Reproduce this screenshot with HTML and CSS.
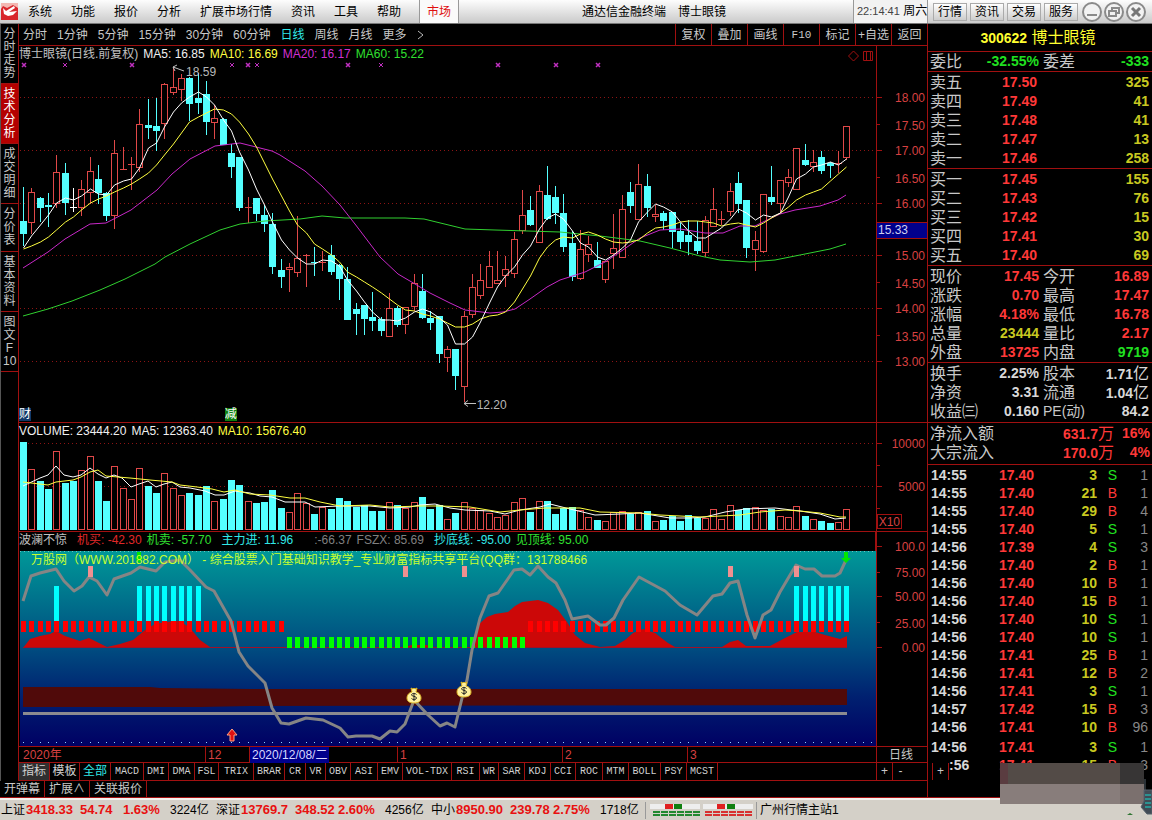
FILE: index.html
```html
<!DOCTYPE html>
<html lang="zh-CN">
<head>
<meta charset="utf-8">
<title>通达信金融终端 博士眼镜</title>
<link rel="stylesheet" href="styles.css">
</head>
<body>
<header class="menubar">
  <svg class="logo" width="17" height="17" viewBox="0 0 17 17" aria-hidden="true"><rect width="17" height="17" fill="#d8262c"/><path d="M0 0h17v5L12 2 6 5 2 3 0 6z" fill="#f3b7b2"/><path d="M2 5l3 3 8-5 1 2-6 4 8-1-4 4-5 1-4-2z" fill="#fff"/></svg>
  <nav class="menus">
    <button>系统</button><button>功能</button><button>报价</button><button>分析</button><button>扩展市场行情</button><button>资讯</button><button>工具</button><button>帮助</button>
  </nav>
  <button class="market">市场</button>
  <h1 class="apptitle"><span>通达信金融终端</span><span>博士眼镜</span></h1>
  <div class="clock"><time>22:14:41</time> 周六</div>
  <div class="quick"><button>行情</button><button>资讯</button><button>交易</button><button>服务</button></div>
  <div class="winbtns">
    <button aria-label="最小化"><svg width="20" height="20" viewBox="0 0 20 20"><circle cx="10" cy="10" r="9" /><path d="M5 13h10"/></svg></button>
    <button aria-label="还原"><svg width="20" height="20" viewBox="0 0 20 20"><circle cx="10" cy="10" r="9" /><path d="M8 9V6h7v5h-3M5 9h7v5H5z"/></svg></button>
    <button aria-label="关闭"><svg width="20" height="20" viewBox="0 0 20 20"><circle cx="10" cy="10" r="9" /><path class="cross" d="M6 6l8 8M14 6l-8 8"/></svg></button>
  </div>
</header>

<main class="work">
  <section class="left">
    <div class="upper">
      <nav class="side">
        <button class="s4">分时走势</button><button class="s4 on">技术分析</button><button class="s4">成交明细</button><button class="s3">分价表</button><button class="s4">基本资料</button><button class="s4">图文<br>F<br><span class="ten">10</span></button>
      </nav>
      <div class="charts">
        <div class="toolbar">
          <div class="periods"><button>分时</button><button>1分钟</button><button>5分钟</button><button>15分钟</button><button>30分钟</button><button>60分钟</button><button class="on">日线</button><button>周线</button><button>月线</button><button>更多</button><svg width="8" height="12" viewBox="0 0 8 12"><path d="M1 2l5 4-5 4" fill="none" stroke="#b8b8b8"/></svg></div>
          <div class="tools"><button>复权</button><button>叠加</button><button>画线</button><button class="mono">F10</button><button>标记</button><button>+自选</button><button>返回</button></div>
        </div>

        <div class="panel">
          <div class="plot">
            <div class="legend"><span class="g">博士眼镜(日线.前复权)</span><span class="w">MA5: 16.85</span><span class="y">MA10: 16.69</span><span class="m">MA20: 16.17</span><span class="gr">MA60: 15.22</span>
              <svg class="corner" width="26" height="12" viewBox="0 0 26 12"><path d="M5.500 1l5 5-5 5-5-5zM15.500 1.500h9v9h-9zM18.500 1.500v9M22.500 1.500v9" fill="none" stroke="#a01010"/></svg></div>
            <svg class="price" id="price" viewBox="19 62 857 360" preserveAspectRatio="none"></svg>
            <span class="note high">18.59</span><span class="note low">12.20</span>
            <span class="badge fin">财</span><span class="badge cut">减</span>
          </div>
          <svg class="axis" width="50" height="376" viewBox="877 46 50 376">
            <path class="tk" d="M877 97.500h5M877 124.500h3M877 150.500h5M877 177.500h3M877 203.500h5M877 255.500h5M877 282.500h3M877 308.500h5M877 335.500h3M877 361.500h5"/>
            <rect x="877" y="222" width="50" height="16" fill="#00008c"/><path class="tk" d="M877 222.500h50M877 238.500h50"/>
            <text x="925" y="102">18.00</text><text x="925" y="130">17.50</text><text x="925" y="155">17.00</text><text x="925" y="183">16.50</text><text x="925" y="208">16.00</text><text x="908" y="234" class="cur">15.33</text><text x="925" y="260">15.00</text><text x="925" y="288">14.50</text><text x="925" y="313">14.00</text><text x="925" y="341">13.50</text><text x="925" y="366">13.00</text>
          </svg>
        </div>

        <div class="panel">
          <div class="plot">
            <div class="legend"><span class="w">VOLUME: 23444.20</span><span class="w">MA5: 12363.40</span><span class="y">MA10: 15676.40</span></div>
            <svg class="vol" id="vol" viewBox="19 439 857 92" preserveAspectRatio="none"></svg>
          </div>
          <svg class="axis" width="50" height="108" viewBox="877 423 50 108">
            <path class="tk" d="M877 443.500h5M877 465.500h3M877 486.500h5M877 508.500h3"/>
            <text x="925" y="448">10000</text><text x="925" y="491">5000</text>
            <rect x="877.500" y="514.500" width="24" height="14" fill="none" stroke="#a01010"/><text x="900" y="526">X10</text>
          </svg>
        </div>

        <div class="panel">
          <div class="plot">
            <div class="legend tall"><span class="g">波澜不惊</span><span class="r first">机买: -42.30</span><span class="gr">机卖: -57.70</span><span class="c first">主力进: 11.96</span><span class="d far">:-66.37</span><span class="d">FSZX: 85.69</span><span class="c first">抄底线: -95.00</span><span class="gr">见顶线: 95.00</span></div>
            <svg class="ind" id="ind" viewBox="19 550 857 196" preserveAspectRatio="none"></svg>
            <span class="banner">万股网（WWW.201882.COM） - 综合股票入门基础知识教学_专业财富指标共享平台(QQ群：131788466</span>
          </div>
          <svg class="axis thick" width="50" height="214" viewBox="877 532 50 214">
            <path class="tk" d="M877 546.500h5M877 572.500h3M877 596.500h5M877 622.500h3M877 647.500h5"/>
            <text x="925" y="551">100.0</text><text x="925" y="577">75.00</text><text x="925" y="601">50.00</text><text x="925" y="628">25.00</text><text x="925" y="652">0.00</text>
          </svg>
        </div>

        <div class="timeaxis">
          <div class="months"><span>2020年</span><span>12</span><span class="day">2020/12/08/二</span><span>1</span><span>2</span><span>3</span></div>
          <button class="unit">日线</button>
        </div>
        <div class="indrow">
          <div class="inds"><button class="act">指标</button><button>模板</button><button class="on">全部</button><button>MACD</button><button>DMI</button><button>DMA</button><button>FSL</button><button>TRIX</button><button>BRAR</button><button>CR</button><button>VR</button><button>OBV</button><button>ASI</button><button>EMV</button><button>VOL-TDX</button><button>RSI</button><button>WR</button><button>SAR</button><button>KDJ</button><button>CCI</button><button>ROC</button><button>MTM</button><button>BOLL</button><button>PSY</button><button>MCST</button></div>
          <div class="zooms"><button>+</button><button>-</button><button class="plus">+</button></div>
        </div>
      </div>
    </div>
    <div class="foot"><button>开弹幕</button><button>扩展∧</button><button>关联报价</button></div>
  </section>

  <aside class="quote">
    <h2><b>300622</b> 博士眼镜</h2>
    <dl class="q4"><dt>委比</dt><dd class="gr">-32.55%</dd><dt>委差</dt><dd class="gr">-333</dd></dl>
    <table class="book">
      <tr><th>卖五</th><td>17.50</td><td>325</td></tr><tr><th>卖四</th><td>17.49</td><td>41</td></tr><tr><th>卖三</th><td>17.48</td><td>41</td></tr><tr><th>卖二</th><td>17.47</td><td>13</td></tr><tr><th>卖一</th><td>17.46</td><td>258</td></tr>
    </table>
    <table class="book">
      <tr><th>买一</th><td>17.45</td><td>155</td></tr><tr><th>买二</th><td>17.43</td><td>76</td></tr><tr><th>买三</th><td>17.42</td><td>15</td></tr><tr><th>买四</th><td>17.41</td><td>30</td></tr><tr><th>买五</th><td>17.40</td><td>69</td></tr>
    </table>
    <dl class="q4 pad">
      <dt>现价</dt><dd>17.45</dd><dt>今开</dt><dd>16.89</dd>
      <dt>涨跌</dt><dd>0.70</dd><dt>最高</dt><dd>17.47</dd>
      <dt>涨幅</dt><dd>4.18%</dd><dt>最低</dt><dd>16.78</dd>
      <dt>总量</dt><dd class="y">23444</dd><dt>量比</dt><dd>2.17</dd>
      <dt>外盘</dt><dd>13725</dd><dt>内盘</dt><dd class="gr">9719</dd>
    </dl>
    <dl class="q4 pad3">
      <dt>换手</dt><dd class="w">2.25%</dd><dt>股本</dt><dd class="w">1.71<i>亿</i></dd>
      <dt>净资</dt><dd class="w">3.31</dd><dt>流通</dt><dd class="w">1.04<i>亿</i></dd>
      <dt>收益㈢</dt><dd class="w">0.160</dd><dt class="pe">PE(动)</dt><dd class="w">84.2</dd>
    </dl>
    <dl class="flow">
      <dt>净流入额</dt><dd>631.7<i>万</i></dd><dd>16%</dd>
      <dt>大宗流入</dt><dd>170.0<i>万</i></dd><dd>4%</dd>
    </dl>
    <table class="ticks">
      <tr><td>14:55</td><td>17.40</td><td>3</td><td class="s">S</td><td>1</td></tr>
      <tr><td>14:55</td><td>17.40</td><td>21</td><td>B</td><td>1</td></tr>
      <tr><td>14:55</td><td>17.40</td><td>29</td><td>B</td><td>4</td></tr>
      <tr><td>14:55</td><td>17.40</td><td>5</td><td class="s">S</td><td>1</td></tr>
      <tr><td>14:56</td><td>17.39</td><td>4</td><td class="s">S</td><td>3</td></tr>
      <tr><td>14:56</td><td>17.40</td><td>2</td><td>B</td><td>1</td></tr>
      <tr><td>14:56</td><td>17.40</td><td>10</td><td>B</td><td>1</td></tr>
      <tr><td>14:56</td><td>17.40</td><td>15</td><td>B</td><td>1</td></tr>
      <tr><td>14:56</td><td>17.40</td><td>10</td><td class="s">S</td><td>1</td></tr>
      <tr><td>14:56</td><td>17.40</td><td>10</td><td class="s">S</td><td>1</td></tr>
      <tr><td>14:56</td><td>17.41</td><td>25</td><td>B</td><td>1</td></tr>
      <tr><td>14:56</td><td>17.41</td><td>12</td><td>B</td><td>2</td></tr>
      <tr><td>14:56</td><td>17.41</td><td>3</td><td class="s">S</td><td>1</td></tr>
      <tr><td>14:57</td><td>17.42</td><td>15</td><td>B</td><td>3</td></tr>
      <tr><td>14:56</td><td>17.41</td><td>10</td><td>B</td><td>96</td></tr>
      <tr class="late"><td>14:56</td><td>17.41</td><td>3</td><td class="s">S</td><td>1</td></tr>
      <tr class="part"><td>:56</td><td>17.41</td><td>15</td><td>B</td><td>3</td></tr>
    </table>
    <svg class="cover" width="152" height="57" viewBox="1000 763 152 57" aria-hidden="true">
      <rect x="1000" y="763" width="144" height="21" fill="#534b47"/><rect x="1000" y="784" width="144" height="20" fill="#887d7b"/>
      <rect x="1000" y="763" width="8" height="21" fill="#5a3c40"/><rect x="1120" y="763" width="24" height="21" fill="#373535"/><rect x="1120" y="784" width="24" height="20" fill="#7b706e"/>
      <path d="M1145 779v11M1144 790h8v24h-5l-6-7 3-6z" fill="#414b55" stroke="#56636c"/><path d="M1145 795h6M1145 799h6M1145 803h6M1145 807h6" stroke="#25aaa5" stroke-width="1.500"/>
      <path d="M1127 815l3-2 3 2z" fill="#2d7530"/>
    </svg>
  </aside>
</main>

<footer class="status">
  <div class="idx"><span>上证</span><b>3418.33</b><b>54.74</b><b>1.63%</b><span>3224亿</span></div>
  <div class="idx"><span>深证</span><b>13769.7</b><b>348.52</b><b>2.60%</b><span>4256亿</span></div>
  <div class="idx"><span>中小</span><b>8950.90</b><b>239.78</b><b>2.75%</b><span>1718亿</span></div>
  <div class="lamps"><svg width="104" height="17" viewBox="648 801 104 17"><path d="M649 803h50v5h-50zM702 803h50v5h-50z" fill="#eee"/><path d="M664 803h8v5h-8zM716 803h8v5h-8z" fill="#e02020"/><path d="M673 803h8v5h-8zM726 803h8v5h-8z" fill="#108010"/><g fill="none" stroke-width="2" stroke-dasharray="7 1"><path d="M652 811h47M652 814h47" stroke="#208830"/><path d="M704 811h47M704 814h47" stroke="#d83030"/></g></svg></div>
  <span class="host">广州行情主站1</span>
</footer>
<script src="charts.js"></script>
</body>
</html>
```

FILE: styles.css
```css
* { box-sizing: border-box; }
body { margin: 0; min-height: 100vh; display: flex; flex-direction: column; background: #000; color: #c8c8c8; font: 12px/16px "Liberation Sans", "Noto Sans CJK SC", sans-serif; overflow-x: hidden; }
button { font: inherit; color: inherit; background: none; border: 0; padding: 0; margin: 0; white-space: nowrap; }
h1, h2, dl, dd { margin: 0; }
.g { color: #c0c0c0; } .w { color: #f0f0f0; } .y { color: #ffff40; } .m { color: #d030d0; } .gr { color: #30e030; } .r { color: #e02828; } .c { color: #30e8e8; } .d { color: #808080; }

.menubar { height: 24px; display: flex; align-items: center; color: #000; background: linear-gradient(#fdfdfd, #cacaca); border-bottom: 1px solid #777; }
.logo { margin: 0 0 0 1px; }
.menus { display: flex; gap: 19px; padding-left: 10px; }
.market { align-self: stretch; width: 40px; margin-left: 18px; color: #e01010; background: #fafafa; border-left: 1px solid #999; border-right: 1px solid #999; }
.apptitle { flex: 1; display: flex; gap: 12px; justify-content: center; padding-right: 4px; font: inherit; }
.clock { align-self: stretch; width: 75px; padding: 3px 0 0 3px; background: #f2f2f2; border-left: 1px solid #999; border-right: 1px solid #999; white-space: nowrap; }
.clock time { font-size: 11px; color: #444; }
.quick { display: flex; gap: 3px; padding-left: 5px; }
.quick button { width: 34px; height: 18px; line-height: 16px; border: 1px solid #aaa; background: linear-gradient(#fff, #ccc); }
.winbtns { display: flex; gap: 2px; padding: 0 6px 0 4px; }
.winbtns button { height: 20px; }
.winbtns svg { display: block; fill: none; stroke: #8a8a8a; stroke-width: 2; }
.winbtns circle { fill: #f2f2f2; }
.winbtns .cross { stroke-width: 3; stroke: #777; }

.work { flex: 1; display: flex; }
.left { flex: 1; min-width: 0; display: flex; flex-direction: column; }
.upper { display: flex; flex: 1; }
.side { width: 19px; display: flex; flex-direction: column; border-left: 1px solid #555; border-right: 1px solid #a01010; }
.side button { width: 17px; padding: 0 2px; line-height: 13px; white-space: normal; word-break: break-all; border-bottom: 1px solid #a01010; }
.side .ten { white-space: nowrap; }
.side .s4 { height: 60px; } .side .s3 { height: 48px; }
.side .on { background: #b40000; color: #fff; }
.charts { flex: 1; min-width: 0; }

.toolbar { height: 22px; display: flex; justify-content: space-between; border-bottom: 1px solid #a01010; }
.periods { display: flex; align-items: center; gap: 10px; padding-left: 4px; }
.on { color: #30e8e8; }
.tools { display: flex; }
.tools button { width: 36px; border-left: 1px solid #a01010; }
.tools .mono { font: 11px "Liberation Mono", monospace; }

.panel { display: flex; border-bottom: 1px solid #a01010; }
.plot { flex: 1; min-width: 0; position: relative; }
.plot svg { display: block; width: 100%; }
.legend { height: 16px; display: flex; gap: 5px; line-height: 17px; white-space: nowrap; }
.legend .corner { width: 26px; height: 12px; margin: 4px 2px 0 auto; }
.legend.tall { height: 18px; }
.legend .first { margin-left: 5px; }
.legend .far { margin-left: 16px; }
.plot .price { height: 360px; } .plot .vol { height: 92px; } .plot .ind { height: 196px; }
.axis { display: block; box-sizing: content-box; border-left: 1px solid #a01010; }
.axis text { font-size: 12px; fill: #d84040; text-anchor: end; }
.axis .cur { fill: #d0d0f0; }
.axis .tk { fill: none; stroke: #a01010; }
.thick { outline: 1px solid #a01010; }
.note { position: absolute; color: #b8b8b8; }
.high { left: 19.500%; top: 18px; } .low { left: 53.400%; top: 351px; }
.badge { position: absolute; top: 362px; width: 12px; line-height: 13px; color: #fff; }
.fin { left: 0; background: #103868; } .cut { left: 24%; background: #108010; }
.banner { position: absolute; left: 12px; top: 20px; color: #c8ff30; white-space: nowrap; }

.timeaxis { height: 16px; display: flex; border-bottom: 1px solid #a01010; }
.months { flex: 1; display: grid; grid-template-columns: 186fr 44fr 148fr 165fr 125fr 189fr; color: #d84040; line-height: 16px; }
.months span { padding-left: 2px; border-left: 1px solid #a01010; }
.months span:first-child { border: 0; padding-left: 4px; }
.months .day { color: #d8d8ff; background: #00008c; justify-self: start; padding: 0 2px; width: 80px; white-space: nowrap; }
.unit { width: 51px; padding-left: 12px; text-align: left; border-left: 1px solid #a01010; }
.indrow { height: 18px; display: flex; justify-content: space-between; border-bottom: 1px solid #a01010; position: relative; }
.inds { display: grid; grid-template-columns: 31px 30px 31px 33px 25px 26px 24px 35px 31px 21px 20px 25px 27px 25px 49px 28px 19px 26px 26px 25px 27px 26px 32px 26px 31px; font: 10px/16px "Liberation Mono", "Noto Sans CJK SC", monospace; }
.inds button { border-right: 1px solid #a01010; color: #d0d0d0; }
.inds button:nth-child(-n+3) { font-size: 12px; }
.inds .act { background: #303030; } .inds button.on { color: #30e8e8; }
.zooms { display: flex; width: 51px; }
.zooms button { width: 16px; line-height: 15px; border-left: 1px solid #a01010; }
.zooms .plus { position: absolute; left: 100%; margin-left: 5px; top: 0; height: 17px; width: 17px; background: #000; border-right: 1px solid #a01010; z-index: 2; }
.foot { height: 17px; display: flex; border-bottom: 1px solid #a01010; line-height: 15px; }
.foot button { padding: 0 4px; border-right: 1px solid #a01010; }

.quote { width: 225px; border-left: 1px solid #a01010; border-bottom: 1px solid #a01010; position: relative; font-size: 16px; height: 774px; }
.quote h2 { height: 28px; line-height: 28px; font-size: 16px; font-weight: 400; color: #ffff30; text-align: center; padding-right: 4px; border-bottom: 1px solid #a01010; }
.quote b, .quote dd, .quote td { font-size: 14px; font-weight: 700; }
.quote i { font-style: normal; font-weight: 400; font-size: 16px; }
.quote dl { display: grid; line-height: 19px; border-bottom: 1px solid #a01010; grid-auto-rows: 19px; }
.quote dd { text-align: right; color: #ff3838; white-space: nowrap; }
.quote dd.gr { color: #20e020; } .quote dd.y { color: #c8c820; } .quote dd.w { color: #d8d8d8; }
.q4 { grid-template-columns: 48px 61px 58px 1fr; padding: 0 3px 0 2px; }
.q4 dt { white-space: nowrap; }
.q4 dt:nth-of-type(even) { padding-left: 4px; }
.quote .pe { font-size: 14px; }
.pad { padding-top: 1px; }
.pad3 { padding-top: 1px; padding-bottom: 1px; }
.book, .ticks { width: 100%; border-collapse: collapse; table-layout: fixed; }
.book { margin-top: 1px; border-bottom: 1px solid #a01010; }
.book tr { height: 19px; }
.book th { width: 48px; padding: 0 0 0 2px; font-weight: 400; text-align: left; line-height: 19px; }
.book td { padding: 0 3px 0 0; text-align: right; line-height: 19px; color: #c8c820; }
.book td:nth-child(2) { width: 64px; color: #ff3838; }
.quote .flow { grid-template-columns: 70px 1fr 36px; padding: 1px 2px 2px; }
.ticks { margin-top: 1px; }
.ticks td { height: 18px; line-height: 18px; padding: 0; text-align: right; color: #c8c820; }
.ticks .late td { height: 20px; padding-top: 2px; }
.ticks td:nth-child(1) { width: 40px; padding-left: 3px; text-align: left; color: #d8d8d8; }
.ticks .part td:nth-child(1) { padding-left: 21px; }
.ticks td:nth-child(2) { width: 66px; color: #ff3838; }
.ticks td:nth-child(3) { width: 63px; }
.ticks td:nth-child(4) { width: 20px; color: #ff3838; font-weight: 400; }
.ticks td.s:nth-child(4) { color: #20e020; }
.ticks td:nth-child(5) { padding-right: 4px; color: #888; font-weight: 400; }
.cover { position: absolute; right: 0; top: 739px; z-index: 3; }

.status { height: 22px; display: flex; align-items: center; background: #d4d0c8; border-top: 2px solid #f4f2ee; color: #000; white-space: nowrap; }
.idx { display: grid; grid-template-columns: 25px 54px 43px 47px 1fr; width: 215px; padding-left: 1px; }
.idx b { font-size: 13px; color: #e81010; }
.lamps { display: flex; padding: 0 3px; border-left: 1px solid #999; border-right: 1px solid #999; }
.host { padding-left: 3px; }
```

FILE: charts.js
```javascript
// Bar kinds: c falling, r rising, w flat. Each bar: kind, high, body top, body bottom, low.
const bars = `c187,221,234,246 r188,192,222,234 c197,198,208,222 c193,205,207,227 r155,172,203,208 c163,173,203,215 w188,207,208,212 r180,189,207,216 r157,171,192,204 c165,179,193,204
c192,193,216,221 r140,153,215,229 r147,169,170,170 r157,164,165,190 r109,124,167,172 c99,125,128,139 c98,126,131,151 r83,84,123,139 r67,87,92,95 r74,78,89,101
c77,78,104,121 c73,98,103,114 c81,94,122,135 r105,118,122,139 c118,119,145,145 c144,153,167,178 c157,157,208,211 r197,207,208,223 c198,198,214,221 c205,215,224,232
c213,224,267,274 c259,270,277,288 r263,267,269,292 r216,258,272,277 r254,255,256,287 c247,262,263,276 r251,262,263,271 c245,255,272,275 c264,265,279,300 c267,279,320,320
c303,309,314,335 c305,305,319,335 c292,317,321,331 c317,319,331,336 r293,308,336,336 c306,308,325,327 r307,307,324,334 r274,283,306,311 c274,291,318,319 c311,318,323,330
c316,316,354,363 r346,349,357,372 c349,349,376,390 r311,316,386,402 r274,287,314,318 r264,280,295,299 r251,266,287,287 r251,280,283,284 r256,269,275,287 r232,239,273,278
r190,215,230,234 c196,210,225,226 r185,191,242,242 c166,195,219,220 c186,197,213,224 c194,213,247,252 c231,243,277,281 r230,249,278,280 r236,244,254,262 c242,260,268,268
r261,261,279,283 r214,248,253,269 r195,209,257,257 c182,192,206,213 r164,184,219,219 c174,186,208,217 r205,214,216,222 c211,213,221,230 c212,212,232,248 c223,231,242,249
c220,235,242,255 c221,241,251,254 r216,220,252,257 r188,209,226,226 r211,219,220,225 r183,191,211,216 c172,183,204,213 c200,200,248,258 r231,240,249,271 r194,194,251,253
c166,197,202,205 r180,180,203,212 r169,177,182,187 r148,148,189,189 c144,160,165,166 r150,162,166,172 c151,157,171,174 c162,163,166,178 r151,163,164,173 r126,126,157,160`
  .split(/\s+/).map(s => [s[0], ...s.slice(1).split(',').map(Number)]);

const volumes = [442,469,481,489,451,483,481,470,456,481,501,466,488,499,468,486,493,473,488,495,493,495,486,501,499,480,485,501,503,502,490,508,512,493,503,514,507,509,498,501,507,505,511,511,502,505,508,502,497,509,505,519,513,502,508,510,513,517,515,502,498,512,501,501,514,508,507,510,517,520,521,512,511,514,512,511,521,520,516,521,515,518,518,509,519,505,510,508,507,510,509,516,517,506,516,519,521,523,522,509];
const ma5 = [248,236,225,215,203,198,200,196,189,194,195,185,181,179,168,148,143,127,112,103,97,92,97,105,120,131,152,170,189,205,222,240,250,258,264,264,260,261,266,280,291,302,312,320,320,321,318,312,309,312,318,325,344,344,337,322,303,287,276,267,255,246,229,218,214,219,231,243,247,257,260,255,248,240,222,212,204,207,212,222,231,238,238,233,228,219,209,213,220,215,217,213,197,179,174,167,165,162,165,159];
const ma10 = [249,246,242,237,230,222,217,210,203,199,196,192,188,184,179,173,165,155,144,133,122,117,113,109,110,114,122,134,147,163,179,196,211,225,233,244,249,255,262,272,277,282,287,293,299,305,310,311,314,316,319,323,327,327,324,319,316,315,312,302,289,276,258,247,240,237,238,234,232,235,239,242,243,242,240,233,228,227,225,222,221,221,222,223,226,224,223,225,227,223,218,213,207,200,195,192,189,181,174,167];

const mid = i => Math.round(23 + 8.315 * i) + 0.5;
const line = (pts, color, w = 1) => `<polyline points="${pts}" fill="none" stroke="${color}" stroke-width="${w}" stroke-linejoin="round"/>`;
const series = (ys, color) => line(ys.map((y, i) => mid(i) + ',' + y).join(' '), color);
const rect = (x, y, w, h, fill) => `<rect x="${x}" y="${y}" width="${w}" height="${h}" fill="${fill}"/>`;
const hollow = (x, y, w, h) => `<rect x="${x}" y="${y}" width="${w}" height="${h}" fill="#000" stroke="#e04848"/>`;
const dots = (y, color, gap, from = 20) => `<path d="M${from} ${y}.5H875" stroke="${color}" stroke-dasharray="1 ${gap}"/>`;
const crisp = s => `<g shape-rendering="crispEdges">${s}</g>`;

const candles = bars.map(([k, hi, top, bot, lo], i) => {
  const x = mid(i), color = k === 'r' ? '#e04848' : k === 'w' ? '#fff' : '#54ffff';
  const wick = `<path d="M${x} ${hi}V${lo}" stroke="${color}"/>`;
  return wick + (k === 'r' && bot - top > 1 ? hollow(x - 3, top + .5, 6, bot - top) : rect(x - 3.5, top, 7, Math.max(1, bot - top), color));
}).join('');
const marks = [[24,3],[65,2],[132,3],[232,2],[248,3],[257,2],[348,3],[381,2],[498,3],[556,3],[598,3]]
  .map(([x, r]) => `<path d="M${x - 2} 63l4 4M${x + 2} 63l-4 4" stroke="#c030c0" stroke-width="${r / 2}"/>`).join('');
document.getElementById('price').innerHTML =
  crisp([97, 150, 203, 255, 308, 361].map(y => dots(y, '#8c1414', 3)).join('') + candles) + marks +
  line('23,316 48,309 72,301 100,290 125,279 155,264 165,257 190,244 220,230 240,224 265,221 300,219 322,216 345,218 405,218 424,219 465,229 495,230 560,232 600,236 640,241 670,248 700,256 720,260 750,262 775,260 800,255 830,249 846,244', '#30d030') +
  line('23,268 48,252 65,239 90,224 106,223 131,210 157,190 172,174 190,159 215,146 240,143 272,151 280,155 305,171 322,186 340,205 355,224 380,257 398,274 415,284 430,293 450,303 465,310 490,313 503,312 515,309 530,299 547,287 560,280 585,272 605,262 620,252 640,238 660,230 680,229 705,233 723,233 740,226 755,226 765,221 780,214 795,210 820,206 838,200 846,195', '#c828c8') +
  series(ma10, '#ffff40') + series(ma5, '#fff') +
  '<path d="M184 71l-11-4m4-2l-4 2 2 4M476 403.500h-12m4-3l-4 3 4 3" fill="none" stroke="#c0c0c0"/>';

document.getElementById('vol').innerHTML =
  crisp(dots(443, '#8c1414', 3) + dots(486, '#8c1414', 3) + volumes.map((y, i) => bars[i][0] === 'r'
    ? hollow(mid(i) - 3, y + .5, 6, 529 - y) : rect(mid(i) - 3.5, y, 7, 530 - y, '#54ffff')).join('')) +
  line('23,486 40,478 48,475 56,466 64,475 73,477 81,475 90,468 98,474 106,478 114,475 122,478 131,487 139,484 148,481 156,487 164,484 172,482 180,487 190,488 205,491 215,495 224,495 235,491 250,493 260,496 272,497 285,502 305,502 315,507 340,506 370,506 390,508 410,507 420,505 435,504 450,508 465,510 490,511 505,514 520,510 540,507 550,504 570,509 595,515 620,514 640,513 670,518 690,518 705,517 725,512 745,509 775,508 800,511 820,514 835,519 846,518', '#fff') +
  line('23,482 48,485 56,482 73,480 81,477 90,472 98,470 106,476 130,478 150,480 172,482 180,485 197,487 212,489 224,492 235,490 250,494 270,495 290,498 305,498 320,502 340,506 370,505 390,507 420,506 440,506 470,507 500,512 520,510 545,508 580,508 600,512 640,513 660,515 700,517 740,515 760,512 785,510 800,511 820,513 840,517 846,517', '#ffff40');

const run = (from, to, y, h, fill) => {
  let s = '';
  for (let i = from; i <= to; i++) s += rect(mid(i) - 2.5, y, 5, h, fill);
  return s;
};
const bag = (x, y) => `<g transform="translate(${x} ${y})"><path d="M-3-8l2 1 1-1 1 1 2-1-1 4c4 1 5 4 5 6 0 3-2 5-7 5s-7-2-7-5c0-2 1-5 5-6z" fill="#fff2a0" stroke="#d8b020"/><path d="M2.500-1.500c-2-2-5-1-5 .5s5 1 5 3-4 2-5 .5M0-3v8" fill="none" stroke="#222"/></g>`;
document.getElementById('ind').innerHTML =
  '<defs><linearGradient id="sea" x1="0" y1="0" x2="0" y2="1"><stop offset="0" stop-color="#009898"/><stop offset=".5" stop-color="#004c80"/><stop offset=".75" stop-color="#002070"/><stop offset="1" stop-color="#000064"/></linearGradient></defs>' +
  rect(20, 551, 856, 195, 'url(#sea)') +
  '<path d="M23 687L150 687 160 688 250 689H847V705L250 706 200 707H23z" fill="#500a0a"/>' +
  '<path d="M23 648L30 639 40 636 50 634 56 631 65 636 80 641 89 638 97 642 107 647 120 644 133 640 145 630 155 624 165 622 180 621 190 628 200 640 210 647 285 648zM400 648l12-3 14 0 12 3zM470 648L478 625 487 617 495 614 508 612 515 606 522 602 538 600 548 603 558 610 567 622 575 635 585 643 600 647 615 646 625 640 633 633 643 629 655 633 668 643 675 647 722 647 730 642 738 640 746 646 770 646 785 638 797 632 815 632 825 635 840 639 847 636V648z" fill="#cc0808"/>' +
  '<path d="M23 647.500H847" stroke="#a01028"/>' +
  crisp(dots(742, '#90d0ff', 7.315, 23) + dots(551, '#70c0c0', 3) + run(0, 31, 621, 11, '#f00') + run(61, 99, 621, 11, '#f00') + run(32, 60, 637, 11, '#0f0') +
    run(4, 4, 586, 35, '#0ff') + run(14, 21, 586, 35, '#0ff') + run(93, 99, 586, 35, '#0ff')) +
  line('23,713.5 847,713.5', '#8b8b90', 3) +
  line('23,601 31,576 40,573 56,569 64,581 74,591 82,586 89,577 97,581 107,595 114,579 131,573 140,567 156,571 165,562 180,560 190,570 206,587 214,591 231,621 239,652 248,666 265,683 272,708 281,723 289,724 306,718 323,720 340,728 348,737 356,736 372,736 380,739 390,731 397,732 405,724 414,700 428,715 440,726 447,723 455,727 464,690 467,680 472,650 480,618 489,596 498,593 505,583 514,570 522,569 530,575 538,566 548,577 556,583 565,600 572,619 588,616 600,625 606,625 614,618 623,600 639,577 665,591 680,605 697,615 713,596 722,594 730,583 738,581 747,615 755,638 763,615 771,610 780,592 796,565 805,569 814,569 822,576 835,576 840,573 846,560', '#858585', 3) +
  crisp([8, 46, 53, 85, 93].map(i => run(i, i, 566, 11, '#f09090')).join('')) +
  '<path d="M846 563l-5-5h3v-6h4v6h3zM139 563l-4-5h2v-6h4v6h2z" fill="#00e800"/>' +
  '<path d="M232 729l-5 6h3v6h4v-6h3z" fill="#e01010" stroke="#ffa080"/>' +
  bag(414, 696) + bag(464, 690);
```
